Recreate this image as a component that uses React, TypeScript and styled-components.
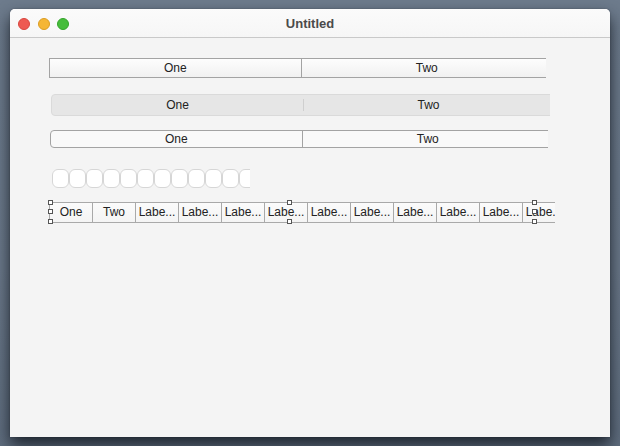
import * as React from 'react';
import styled, { createGlobalStyle } from 'styled-components';

const GlobalStyle = createGlobalStyle`
  html, body {
    margin: 0;
    padding: 0;
    width: 620px;
    height: 446px;
    overflow: hidden;
  }
  body {
    font-family: "Liberation Sans", Arial, sans-serif;
  }
`;

type Variant = 'flat' | 'filled' | 'rounded';

interface Control {
  variant: Variant;
  left: number;
  top: number;
  clip: number;
  height: number;
}

const controls: Control[] = [
  { variant: 'flat', left: 39, top: 20, clip: 497, height: 20 },
  { variant: 'filled', left: 41, top: 16, clip: 499, height: 22 },
  { variant: 'rounded', left: 40, top: 14, clip: 498, height: 18 },
];

// the labels are truncated in the reference, shown as they appear
const labels = ['One', 'Two', ...Array(10).fill('Labe...')];

export default function App() {
  return (
    <>
      <GlobalStyle />
      <Desktop>
        <Window>
          <TitleBar>
            <Lights>
              <Light color="#ee5a52" edge="#d9463e" />
              <Light color="#f5b635" edge="#dc9d22" />
              <Light color="#46bd3b" edge="#34a52a" />
            </Lights>
            <Title>Untitled</Title>
          </TitleBar>
          <Content>
            {controls.map((c, i) => (
              <Clip key={i} left={c.left} top={c.top} width={c.clip}>
                <Segmented variant={c.variant} height={c.height}>
                  <Segment variant={c.variant}>One</Segment>
                  <Segment variant={c.variant} divided>
                    Two
                  </Segment>
                </Segmented>
              </Clip>
            ))}
            <Clip left={42} top={21} width={198}>
              <Chips>
                {Array.from({ length: 12 }).map((_, i) => (
                  <Chip key={i} />
                ))}
              </Chips>
            </Clip>
            <Selected>
              <Clip left={0} top={0} width={506}>
                <LabelBar>
                  {labels.map((l, i) => (
                    <LabelCell key={i}>{l}</LabelCell>
                  ))}
                </LabelBar>
              </Clip>
              <Handle style={{ left: -1, top: -2 }} />
              <Handle style={{ left: -1, top: 7 }} />
              <Handle style={{ left: -1, top: 17 }} />
              <Handle style={{ left: 238, top: -2 }} />
              <Handle style={{ left: 238, top: 17 }} />
              <Handle style={{ left: 483, top: -2 }} />
              <Handle style={{ left: 483, top: 7 }} />
              <Handle style={{ left: 483, top: 17 }} />
            </Selected>
          </Content>
        </Window>
      </Desktop>
    </>
  );
}

const Desktop = styled.div`
  width: 620px;
  height: 446px;
  background: linear-gradient(180deg, #6d7b8c 0%, #6a7889 60%, #5f6d7e 100%);
  padding: 9px 10px 0;
  box-sizing: border-box;
`;

const Window = styled.div`
  width: 600px;
  height: 428px;
  background: #f4f4f4;
  border-radius: 5px 5px 0 0;
  box-shadow: 0 8px 16px rgba(18, 24, 32, 0.85), 0 0 2px rgba(0, 0, 0, 0.3);
  display: flex;
  flex-direction: column;
  overflow: hidden;
`;

const TitleBar = styled.div`
  height: 28px;
  flex: none;
  background: linear-gradient(180deg, #fbfbfb, #f6f6f6);
  border-bottom: 1px solid #c9c9c9;
  display: flex;
  align-items: center;
  position: relative;
`;

const Lights = styled.div`
  display: flex;
  gap: 7.5px;
  padding-left: 8px;
  padding-top: 1px;
`;

const Light = styled.div<{ color: string; edge: string }>`
  width: 12px;
  height: 12px;
  box-sizing: border-box;
  border-radius: 50%;
  background: ${p => p.color};
  border: 0.5px solid ${p => p.edge};
`;

const Title = styled.div`
  position: absolute;
  left: 0;
  right: 0;
  top: 0;
  bottom: 0;
  display: flex;
  align-items: center;
  justify-content: center;
  font-size: 13px;
  font-weight: bold;
  color: #4b4b4b;
  padding-top: 1px;
`;

const Content = styled.div`
  display: flex;
  flex-direction: column;
  align-items: flex-start;
  flex: 1;
`;

const Clip = styled.div<{ left: number; top: number; width: number }>`
  margin-left: ${p => p.left}px;
  margin-top: ${p => p.top}px;
  width: ${p => p.width}px;
  overflow: hidden;
  flex: none;
`;

const Segmented = styled.div<{ variant: Variant; height: number }>`
  display: flex;
  width: 504px;
  height: ${p => p.height}px;
  box-sizing: border-box;
  border: 1px solid ${p => (p.variant === 'filled' ? '#dadada' : '#a3a3a3')};
  border-radius: ${p => (p.variant === 'flat' ? '0' : '4px')};
  background: ${p =>
    p.variant === 'filled'
      ? '#e6e6e6'
      : p.variant === 'flat'
        ? 'linear-gradient(180deg, #fdfdfd, #f1f1f1)'
        : '#f9f9f9'};
`;

const Segment = styled.div<{ variant: Variant; divided?: boolean }>`
  flex: 1;
  display: flex;
  align-items: center;
  justify-content: center;
  font-size: 12px;
  color: #222;
  position: relative;
  border-left: ${p =>
    p.divided && p.variant !== 'filled' ? '1px solid #a3a3a3' : 'none'};
  &::before {
    content: '';
    display: ${p => (p.divided && p.variant === 'filled' ? 'block' : 'none')};
    position: absolute;
    left: 0;
    top: 4px;
    bottom: 4px;
    width: 1px;
    background: #cfcfcf;
  }
`;

const Chips = styled.div`
  display: flex;
  width: 220px;
  height: 19px;
`;

const Chip = styled.div`
  flex: none;
  width: 17px;
  height: 19px;
  box-sizing: border-box;
  background: #fff;
  border: 1px solid #d6d6d6;
  border-radius: 6px;
`;

const Selected = styled.div`
  position: relative;
  margin-left: 39px;
  margin-top: 14px;
`;

const LabelBar = styled.div`
  display: flex;
  height: 21px;
  width: 516px;
  box-sizing: border-box;
  border-top: 1px solid #a9a9a9;
  border-bottom: 1px solid #a9a9a9;
  background: linear-gradient(180deg, #fbfbfb, #f4f4f4);
`;

const LabelCell = styled.div`
  flex: none;
  width: 43px;
  box-sizing: border-box;
  border-left: 1px solid #a9a9a9;
  font-size: 12px;
  line-height: 19px;
  color: #222;
  white-space: nowrap;
  overflow: hidden;
  text-align: center;
`;

const Handle = styled.div`
  position: absolute;
  width: 5px;
  height: 5px;
  box-sizing: border-box;
  background: #fff;
  border: 1px solid #555;
`;
